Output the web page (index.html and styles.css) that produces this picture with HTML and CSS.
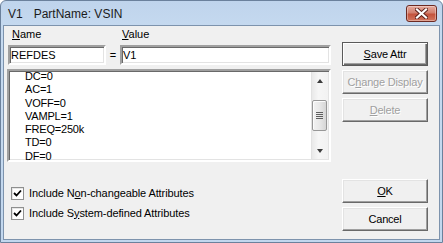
FILE: index.html
```html
<!DOCTYPE html>
<html lang="en">
<head>
  <meta charset="UTF-8">
  <title>V1 PartName: VSIN</title>
  <link rel="stylesheet" href="styles.css">
</head>
<body>
  <div class="window">
    <div class="titlebar">
      <span class="title">V1</span>
      <span class="title part">PartName: VSIN</span>
      <button class="close" title="Close">
        <svg width="13" height="11" viewBox="0 0 13 11">
          <path d="M2 1.5 L11 9.5 M11 1.5 L2 9.5" stroke="#5a1f18" stroke-width="4" stroke-linecap="square"/>
          <path d="M2 1.5 L11 9.5 M11 1.5 L2 9.5" stroke="#fff" stroke-width="2.2" stroke-linecap="square"/>
        </svg>
      </button>
    </div>

    <div class="client">
      <div class="main">
        <div class="labels">
          <span class="lbl name-lbl"><u>N</u>ame</span>
          <span class="lbl"><u>V</u>alue</span>
        </div>
        <div class="fields">
          <input class="field name-field" value="REFDES" readonly>
          <span class="eq">=</span>
          <input class="field value-field" value="V1" readonly>
        </div>

        <div class="listbox">
          <ul class="items">
            <li>DC=0</li>
            <li>AC=1</li>
            <li>VOFF=0</li>
            <li>VAMPL=1</li>
            <li>FREQ=250k</li>
            <li>TD=0</li>
            <li>DF=0</li>
          </ul>
          <div class="scrollbar">
            <div class="arrow up"></div>
            <div class="track">
              <div class="thumb"><span></span><span></span><span></span><span></span></div>
            </div>
            <div class="arrow down"></div>
          </div>
        </div>

        <div class="options">
          <label class="check"><span class="box"><svg width="9" height="9" viewBox="0 0 9 9"><path d="M1 4 L3.5 6.5 L8 1.5" stroke="#000" stroke-width="1.8" fill="none"/></svg></span>Include N<u>o</u>n-changeable Attributes</label>
          <label class="check"><span class="box"><svg width="9" height="9" viewBox="0 0 9 9"><path d="M1 4 L3.5 6.5 L8 1.5" stroke="#000" stroke-width="1.8" fill="none"/></svg></span>Include S<u>y</u>stem-defined Attributes</label>
        </div>
      </div>

      <div class="side">
        <div class="btn-group">
          <button class="btn default"><u>S</u>ave Attr</button>
          <button class="btn" disabled>C<u>h</u>ange Display</button>
          <button class="btn" disabled><u>D</u>elete</button>
        </div>
        <div class="btn-group bottom">
          <button class="btn"><u>O</u>K</button>
          <button class="btn">Cancel</button>
        </div>
      </div>
    </div>
  </div>
</body>
</html>
```

FILE: styles.css
```css
* {
  box-sizing: border-box;
}
body {
  margin: 0;
  padding: 0;
  background: #fff;
  font-family: 'Liberation Sans', Arial, sans-serif;
  font-size: 11px;
  color: #000;
}
.window {
  width: 443px;
  height: 243px;
  display: flex;
  flex-direction: column;
  border: 1px solid #6b819c;
  border-radius: 6px 6px 0 0;
  padding: 0 2px 2px 2px;
  background: linear-gradient(to bottom, #bfd4ec, #c6daf0 30px, #c2d7ee);
}
.titlebar {
  height: 24px;
  display: flex;
  align-items: center;
  padding-left: 5px;
}
.title {
  font-size: 12px;
  color: #1b1b1b;
  margin-top: 1px;
}
.title.part {
  margin-left: 11px;
}
.close {
  margin-left: auto;
  margin-right: 3px;
  width: 31px;
  height: 17px;
  padding: 0;
  display: flex;
  align-items: center;
  justify-content: center;
  border: 1px solid #6d2a22;
  border-radius: 3px;
  background: linear-gradient(to bottom, #e6aa9e, #d2806e 45%, #c4533c 55%, #d2765e);
  box-shadow: inset 0 0 0 1px rgba(255, 255, 255, 0.35);
}
.client {
  flex: 1;
  display: grid;
  grid-template-columns: 325px 86px;
  column-gap: 10px;
  padding: 0 11px 0 3px;
  background: #f0f0f0;
  border: 1px solid #7d93ad;
}
.main {
  display: flex;
  flex-direction: column;
}
.labels {
  display: flex;
  margin-top: 2px;
  padding-left: 5px;
  line-height: 13px;
}
.name-lbl {
  width: 110px;
}
.fields {
  display: flex;
  margin-top: 4px;
  height: 20px;
}
.field {
  height: 20px;
  margin: 0;
  padding: 0 0 0 1px;
  font-family: 'Liberation Sans', Arial, sans-serif;
  font-size: 11px;
  color: #000;
  background: #fff;
  border: 2px solid;
  border-color: #a0a0a0 #fff #fff #a0a0a0;
  box-shadow: inset 1px 1px #696969, inset -1px -1px #e3e3e3;
  outline: none;
}
.name-field {
  margin-left: 1px;
  width: 98px;
}
.value-field {
  width: 211px;
}
.eq {
  width: 14px;
  text-align: center;
  line-height: 20px;
}
.listbox {
  margin-top: 4px;
  width: 324px;
  height: 93px;
  display: flex;
  background: #fff;
  border: 2px solid;
  border-color: #a0a0a0 #fff #fff #a0a0a0;
  box-shadow: inset 1px 1px #696969, inset -1px -1px #e3e3e3;
  overflow: hidden;
}
.items {
  flex: 1;
  list-style: none;
  margin: -1px 0 0 0;
  padding: 0 0 0 16px;
  line-height: 13.3px;
  letter-spacing: -0.2px;
}
.scrollbar {
  width: 17px;
  margin: 1px 1px 1px 0;
  display: flex;
  flex-direction: column;
  background: linear-gradient(to right, #e9e9e9, #f6f6f6 40%, #f2f2f2);
  border-left: 1px solid #e2e2e2;
}
.arrow {
  height: 17px;
  display: flex;
  align-items: center;
  justify-content: center;
}
.arrow::after {
  content: '';
  border-left: 3.5px solid transparent;
  border-right: 3.5px solid transparent;
}
.arrow.up::after {
  border-bottom: 4px solid #3c3c3c;
}
.arrow.down::after {
  border-top: 4px solid #3c3c3c;
}
.track {
  flex: 1;
  padding-top: 11px;
}
.thumb {
  width: 15px;
  height: 31px;
  border: 1px solid #979797;
  border-radius: 2px;
  background: linear-gradient(to right, #f2f2f2, #e8e8e8 50%, #d6d6d6);
  box-shadow: inset 1px 1px #fcfcfc;
  display: flex;
  flex-direction: column;
  align-items: center;
  justify-content: center;
  gap: 1px;
}
.thumb span {
  width: 7px;
  height: 1px;
  background: #5f5f5f;
}
.options {
  margin-top: auto;
  padding-bottom: 16px;
}
.check {
  height: 20px;
  display: flex;
  align-items: center;
  line-height: 13px;
  padding-left: 4px;
  letter-spacing: -0.1px;
}
.box {
  width: 13px;
  height: 13px;
  margin-right: 5px;
  display: flex;
  align-items: center;
  justify-content: center;
  background: #fff;
  border: 1px solid #8e8f8f;
  box-shadow: inset 1px 1px #e6e6e6;
}
.side {
  display: flex;
  flex-direction: column;
  padding-top: 16px;
  padding-bottom: 8px;
}
.btn-group {
  display: flex;
  flex-direction: column;
  gap: 4px;
}
.btn-group.bottom {
  margin-top: auto;
}
.btn {
  width: 86px;
  height: 24px;
  padding: 0;
  font-family: 'Liberation Sans', Arial, sans-serif;
  font-size: 11px;
  letter-spacing: -0.2px;
  color: #000;
  background: #f0f0f0;
  border: 1px solid;
  border-color: #fff #696969 #696969 #fff;
  box-shadow: inset -1px -1px #a0a0a0, inset 1px 1px #e3e3e3;
}
.btn.default {
  border: 1px solid #5a5a5a;
  box-shadow: inset 1px 1px #fff, inset -1px -1px #696969, inset -2px -2px #a0a0a0;
}
.btn:disabled {
  color: #a0a0a0;
  text-shadow: 1px 1px #fff;
}
```
